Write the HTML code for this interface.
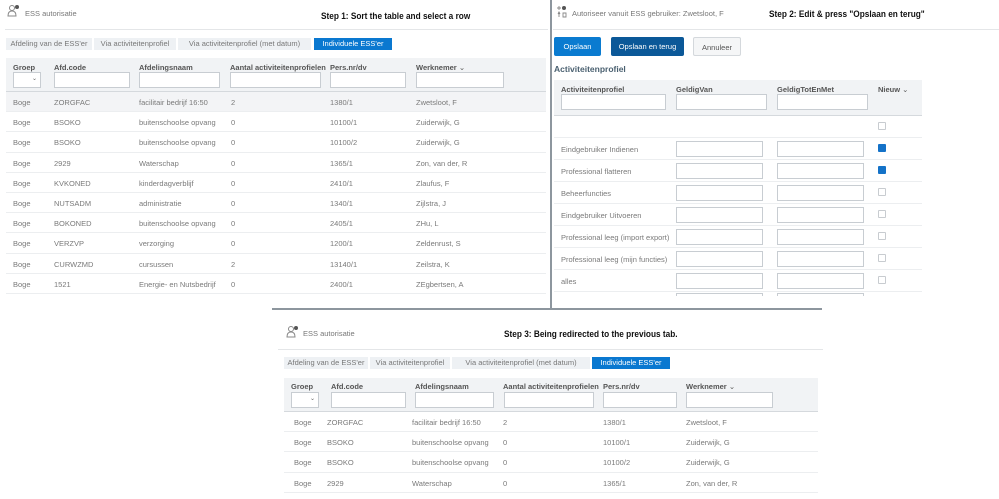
<!DOCTYPE html>
<html><head><meta charset="utf-8">
<style>
*{margin:0;padding:0;box-sizing:border-box}
body{width:999px;height:499px;background:#fff;position:relative;overflow:hidden;font-family:"Liberation Sans",sans-serif;color:#666;font-size:7.5px}
.a{position:absolute;white-space:nowrap}
.r{color:#7a7a7a}
.t{position:absolute;font-weight:bold;color:#111;font-size:9.5px;white-space:nowrap;transform:scaleX(0.87);transform-origin:0 0}
.sep{position:absolute;height:1px;background:#e4e6e8}
.tab{position:absolute;height:12px;background:#eef1f4;color:#777;font-size:7.5px;text-align:center;line-height:12px}
.tab.on{background:#0a78d0;color:#fff}
.hd{position:absolute;background:#f1f3f5;border-bottom:1px solid #d5d9dd}
.lb{position:absolute;font-weight:bold;color:#555;font-size:7.5px}
.in{position:absolute;height:16px;background:#fff;border:1px solid #c8cdd2}
.row{position:absolute;border-bottom:1px solid #eceef0}
.cb{position:absolute;width:8px;height:8px;border:1px solid #c8ccd0;border-radius:1px;background:#fff}
.cb.on{background:#1472c8;border-color:#1472c8}
.btn{position:absolute;height:19px;border-radius:2px;font-size:7.5px;text-align:center;line-height:19px}
</style></head><body>

<!-- LEFT PANEL -->
<svg class="a" style="left:7px;top:4px" width="14" height="14" viewBox="0 0 14 14"><circle cx="5" cy="4" r="2.5" fill="none" stroke="#888" stroke-width="1"/><path d="M1 12 Q1 7 5 7 Q9 7 9 12 Z" fill="none" stroke="#888" stroke-width="1"/><circle cx="10" cy="3" r="2" fill="#555"/></svg>
<div class="a" style="left:25px;top:9px;color:#777">ESS autorisatie</div>
<div class="t" style="left:321px;top:11px">Step 1: Sort the table and select a row</div>
<div class="sep" style="left:5px;top:29px;width:543px"></div>
<div class="tab" style="left:6px;top:38px;width:86px">Afdeling van de ESS'er</div>
<div class="tab" style="left:94px;top:38px;width:82px">Via activiteitenprofiel</div>
<div class="tab" style="left:178px;top:38px;width:133px">Via activiteitenprofiel (met datum)</div>
<div class="tab on" style="left:314px;top:38px;width:78px">Individuele ESS'er</div>
<div class="hd" style="left:6px;top:58px;width:540px;height:34px"></div>
<div class="lb" style="left:13px;top:63px">Groep</div>
<div class="lb" style="left:54px;top:63px">Afd.code</div>
<div class="lb" style="left:139px;top:63px">Afdelingsnaam</div>
<div class="lb" style="left:230px;top:63px">Aantal activiteitenprofielen</div>
<div class="lb" style="left:330px;top:63px">Pers.nr/dv</div>
<div class="lb" style="left:416px;top:63px">Werknemer <span style="font-weight:normal">⌄</span></div>
<div class="in" style="left:13px;top:72px;width:28px"><span class="a" style="left:18px;top:2px;font-size:6px">⌄</span></div>
<div class="in" style="left:54px;top:72px;width:76px"></div>
<div class="in" style="left:139px;top:72px;width:81px"></div>
<div class="in" style="left:230px;top:72px;width:91px"></div>
<div class="in" style="left:330px;top:72px;width:76px"></div>
<div class="in" style="left:416px;top:72px;width:88px"></div>

<div id="L"></div>

<!-- dividers -->
<div class="a" style="left:550px;top:0;width:2px;height:310px;background:#8d969e"></div>
<div class="a" style="left:272px;top:308px;width:550px;height:2px;background:#8d969e"></div>

<!-- RIGHT PANEL -->
<svg class="a" style="left:556px;top:5px" width="12" height="14" viewBox="0 0 12 14"><circle cx="8" cy="3" r="2" fill="#555"/><path d="M1 3h4M3 1v4M2 9l1-2 1 2M3 7v5M7 8h3v4h-3z" fill="none" stroke="#888" stroke-width="0.9"/></svg>
<div class="a" style="left:572px;top:9px;color:#777">Autoriseer vanuit ESS gebruiker: Zwetsloot, F</div>
<div class="t" style="left:769px;top:9px">Step 2: Edit &amp; press "Opslaan en terug"</div>
<div class="sep" style="left:553px;top:29px;width:446px"></div>
<div class="btn" style="left:554px;top:37px;width:47px;background:#0a7bd0;color:#fff">Opslaan</div>
<div class="btn" style="left:611px;top:37px;width:73px;background:#0b5898;color:#fff">Opslaan en terug</div>
<div class="btn" style="left:693px;top:37px;width:48px;background:#f5f6f7;border:1px solid #d4d8dc;color:#555">Annuleer</div>
<div class="a" style="left:554px;top:64px;font-weight:bold;color:#4a6070;font-size:8.5px">Activiteitenprofiel</div>
<div class="hd" style="left:554px;top:80px;width:368px;height:36px"></div>
<div class="lb" style="left:561px;top:85px">Activiteitenprofiel</div>
<div class="lb" style="left:676px;top:85px">GeldigVan</div>
<div class="lb" style="left:777px;top:85px">GeldigTotEnMet</div>
<div class="lb" style="left:878px;top:85px">Nieuw <span style="font-weight:normal">⌄</span></div>
<div class="in" style="left:561px;top:94px;width:105px"></div>
<div class="in" style="left:676px;top:94px;width:91px"></div>
<div class="in" style="left:777px;top:94px;width:91px"></div>
<div id="R"></div>

<!-- BOTTOM PANEL -->
<svg class="a" style="left:286px;top:325px" width="14" height="14" viewBox="0 0 14 14"><circle cx="5" cy="4" r="2.5" fill="none" stroke="#888" stroke-width="1"/><path d="M1 12 Q1 7 5 7 Q9 7 9 12 Z" fill="none" stroke="#888" stroke-width="1"/><circle cx="10" cy="3" r="2" fill="#555"/></svg>
<div class="a" style="left:303px;top:329px;color:#777">ESS autorisatie</div>
<div class="t" style="left:504px;top:329px">Step 3: Being redirected to the previous tab.</div>
<div class="sep" style="left:278px;top:349px;width:545px"></div>
<div class="tab" style="left:284px;top:357px;width:84px">Afdeling van de ESS'er</div>
<div class="tab" style="left:370px;top:357px;width:80px">Via activiteitenprofiel</div>
<div class="tab" style="left:452px;top:357px;width:138px">Via activiteitenprofiel (met datum)</div>
<div class="tab on" style="left:592px;top:357px;width:78px">Individuele ESS'er</div>
<div class="hd" style="left:284px;top:378px;width:534px;height:34px"></div>
<div class="lb" style="left:291px;top:382px">Groep</div>
<div class="lb" style="left:331px;top:382px">Afd.code</div>
<div class="lb" style="left:415px;top:382px">Afdelingsnaam</div>
<div class="lb" style="left:503px;top:382px">Aantal activiteitenprofielen</div>
<div class="lb" style="left:603px;top:382px">Pers.nr/dv</div>
<div class="lb" style="left:686px;top:382px">Werknemer <span style="font-weight:normal">⌄</span></div>
<div class="in" style="left:291px;top:392px;width:28px"><span class="a" style="left:18px;top:2px;font-size:6px">⌄</span></div>
<div class="in" style="left:331px;top:392px;width:75px"></div>
<div class="in" style="left:415px;top:392px;width:79px"></div>
<div class="in" style="left:504px;top:392px;width:90px"></div>
<div class="in" style="left:603px;top:392px;width:74px"></div>
<div class="in" style="left:686px;top:392px;width:87px"></div>
<div id="B"></div>

<script>
var rows=[["Boge","ZORGFAC","facilitair bedrijf 16:50","2","1380/1","Zwetsloot, F"],
["Boge","BSOKO","buitenschoolse opvang","0","10100/1","Zuiderwijk, G"],
["Boge","BSOKO","buitenschoolse opvang","0","10100/2","Zuiderwijk, G"],
["Boge","2929","Waterschap","0","1365/1","Zon, van der, R"],
["Boge","KVKONED","kinderdagverblijf","0","2410/1","Zlaufus, F"],
["Boge","NUTSADM","administratie","0","1340/1","Zijlstra, J"],
["Boge","BOKONED","buitenschoolse opvang","0","2405/1","ZHu, L"],
["Boge","VERZVP","verzorging","0","1200/1","Zeldenrust, S"],
["Boge","CURWZMD","cursussen","2","13140/1","Zeilstra, K"],
["Boge","1521","Energie- en Nutsbedrijf","0","2400/1","ZEgbertsen, A"]];
function tbl(id,x0,y0,w,xs,n,hl){var h="";for(var i=0;i<n;i++){var y=y0+i*20.2;
h+='<div class="row" style="left:'+x0+'px;top:'+y+'px;width:'+w+'px;height:20.2px;'+(hl&&i==0?'background:#f3f4f6':'')+'"></div>';
for(var j=0;j<6;j++)h+='<div class="a r" style="left:'+xs[j]+'px;top:'+(y+6)+'px">'+rows[i][j]+'</div>';}
document.getElementById(id).outerHTML=h;}
tbl("L",6,92,540,[13,54,139,231,330,416],10,true);
tbl("B",284,412,534,[294,327,412,503,603,686],4,false);
var ap=["","Eindgebruiker Indienen","Professional flatteren","Beheerfuncties","Eindgebruiker Uitvoeren","Professional leeg (import export)","Professional leeg (mijn functies)","alles"];
var h="";for(var i=0;i<ap.length;i++){var y=116+i*22;
h+='<div class="row" style="left:554px;top:'+y+'px;width:368px;height:22px"></div>';
h+='<div class="a r" style="left:561px;top:'+(y+7)+'px">'+ap[i]+'</div>';
if(i>0){h+='<div class="in" style="left:676px;top:'+(y+3)+'px;width:87px"></div><div class="in" style="left:777px;top:'+(y+3)+'px;width:87px"></div>';}
h+='<div class="cb'+(i==1||i==2?' on':'')+'" style="left:878px;top:'+(y+6)+'px"></div>';}
h+='<div class="in" style="left:676px;top:293px;width:87px;height:3px;border-bottom:none"></div><div class="in" style="left:777px;top:293px;width:87px;height:3px;border-bottom:none"></div>';
document.getElementById("R").outerHTML=h;
</script>
</body></html>
